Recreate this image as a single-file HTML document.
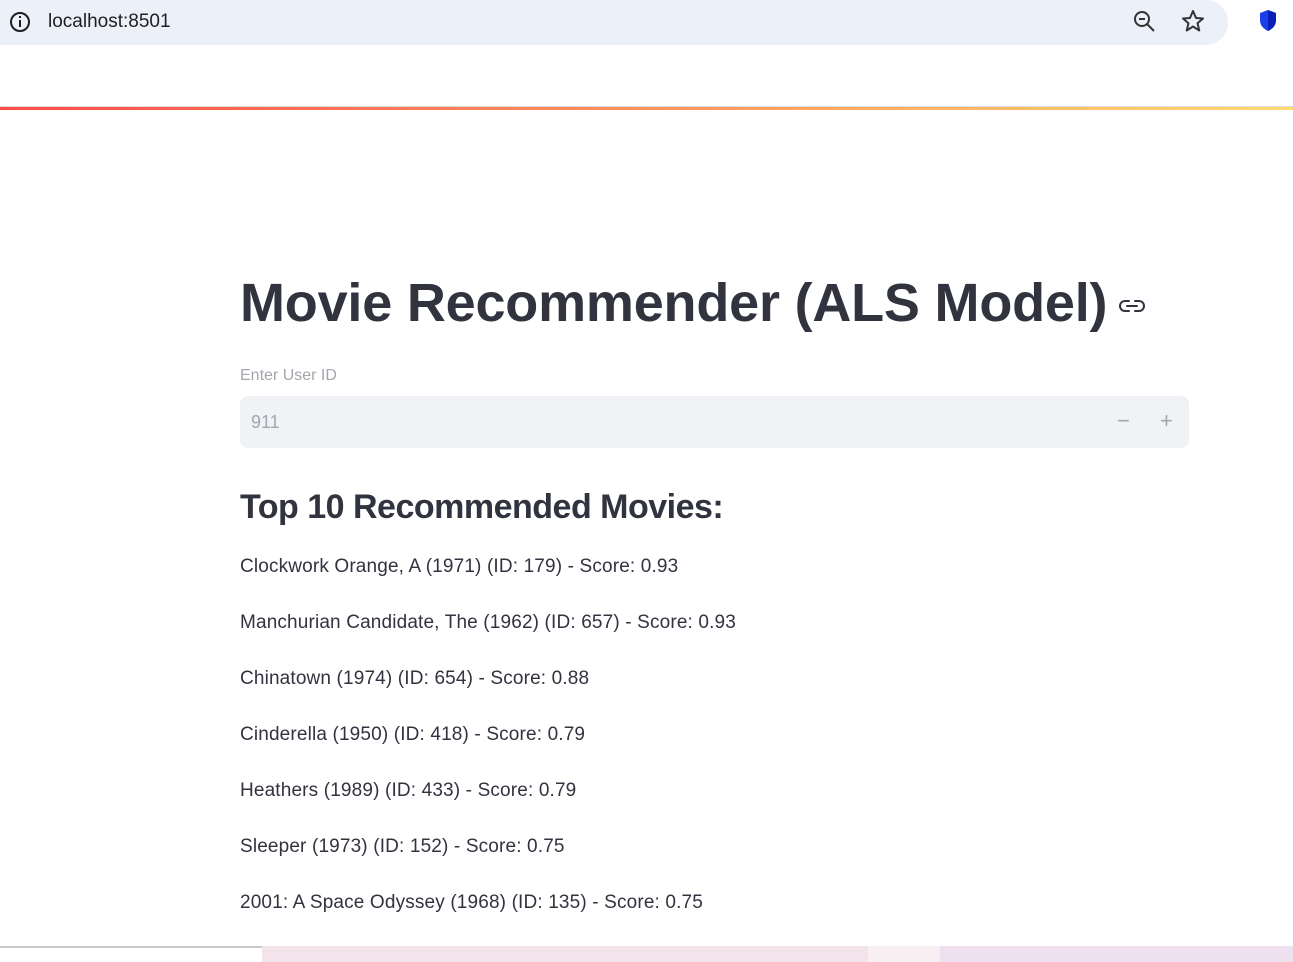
<!DOCTYPE html>
<html><head><meta charset="utf-8"><style>
body{margin:0;width:1293px;height:962px;overflow:hidden;background:#fff;font-family:"Liberation Sans",sans-serif;position:relative;color:#31333f}
.bar{position:absolute;left:0;top:0;width:1228px;height:45px;background:#ebf0f9;border-radius:0 22px 22px 0}
.url{position:absolute;left:48px;top:11px;font-size:19px;color:#1f1f1f}
.grad{position:absolute;left:0;top:107px;width:1293px;height:3px;background:linear-gradient(90deg,#ff4b4b,#fdda6e)}
.sep{position:absolute;left:0;top:106px;width:1293px;height:1px;background:#ddd}
h1{position:absolute;left:240px;top:272px;margin:0;font-size:54px;font-weight:bold;letter-spacing:-0.2px;color:#31333f;white-space:nowrap}
.lbl{position:absolute;left:240px;top:367px;font-size:16px;color:#a3a6ad}
.inp{position:absolute;left:240px;top:396px;width:949px;height:52px;background:#f0f2f6;border-radius:8px}
.inp span{position:absolute;top:16px;font-size:18px;color:#a3a6ad}
h2{position:absolute;left:240px;top:488px;margin:0;font-size:34px;font-weight:bold;letter-spacing:-0.5px;color:#31333f}
.m{position:absolute;left:240px;font-size:19px;letter-spacing:0.15px;color:#31333f;white-space:nowrap}
.tb{position:absolute;left:262px;top:946px;width:1031px;height:16px;background:#f2e4ea}
</style></head><body>
<div class="bar">
<svg style="position:absolute;left:8px;top:10px" width="24" height="24"><circle cx="12" cy="12" r="9" fill="none" stroke="#1f1f1f" stroke-width="2"/><rect x="11" y="10" width="2" height="7" fill="#1f1f1f"/><rect x="11" y="6" width="2" height="2" fill="#1f1f1f"/></svg>
<div class="url">localhost:8501</div>
<svg style="position:absolute;left:1132px;top:9px" width="26" height="26"><circle cx="10" cy="10" r="7" fill="none" stroke="#333" stroke-width="2"/><path d="M15 15l7 7M7 10h6" stroke="#333" stroke-width="2"/></svg>
<svg style="position:absolute;left:1180px;top:9px" width="26" height="26"><path d="M13 2l3 7 7 .5-5.5 4.8 1.8 7.2L13 17.5 6.7 21.5l1.8-7.2L3 9.5 10 9z" fill="none" stroke="#333" stroke-width="2" stroke-linejoin="round"/></svg>
</div>
<svg style="position:absolute;left:1258px;top:9px" width="20" height="24"><path d="M10 1L2 4v7c0 6 4 9 8 11 4-2 8-5 8-11V4z" fill="#1a3ee8"/><path d="M10 1L18 4v7c0 6-4 9-8 11z" fill="#0a1fb8"/></svg>
<div class="sep"></div><div class="grad"></div>
<h1>Movie Recommender (ALS Model)</h1>
<svg style="position:absolute;left:1119px;top:297px" width="26" height="18" fill="none" stroke="#31333f" stroke-width="2" stroke-linecap="round"><path d="M10 4H6a5 5 0 0 0 0 10h4M16 4h4a5 5 0 0 1 0 10h-4M8 9h10"/></svg>
<div class="lbl">Enter User ID</div>
<div class="inp"><span style="left:11px">911</span><span style="left:877px;top:12px;font-size:22px">−</span><span style="left:920px;top:12px;font-size:22px">+</span></div>
<h2>Top 10 Recommended Movies:</h2>
<div class="m" style="top:556px">Clockwork Orange, A (1971) (ID: 179) - Score: 0.93</div>
<div class="m" style="top:612px">Manchurian Candidate, The (1962) (ID: 657) - Score: 0.93</div>
<div class="m" style="top:668px">Chinatown (1974) (ID: 654) - Score: 0.88</div>
<div class="m" style="top:724px">Cinderella (1950) (ID: 418) - Score: 0.79</div>
<div class="m" style="top:780px">Heathers (1989) (ID: 433) - Score: 0.79</div>
<div class="m" style="top:836px">Sleeper (1973) (ID: 152) - Score: 0.75</div>
<div class="m" style="top:892px">2001: A Space Odyssey (1968) (ID: 135) - Score: 0.75</div>
<div style="position:absolute;left:0;top:946px;width:262px;height:2px;background:#c8c8c8"></div>
<div class="tb"></div>
<div style="position:absolute;left:868px;top:946px;width:72px;height:16px;background:#f7eff2"></div>
<div style="position:absolute;left:940px;top:946px;width:353px;height:16px;background:#eee0ee"></div>
</body></html>
